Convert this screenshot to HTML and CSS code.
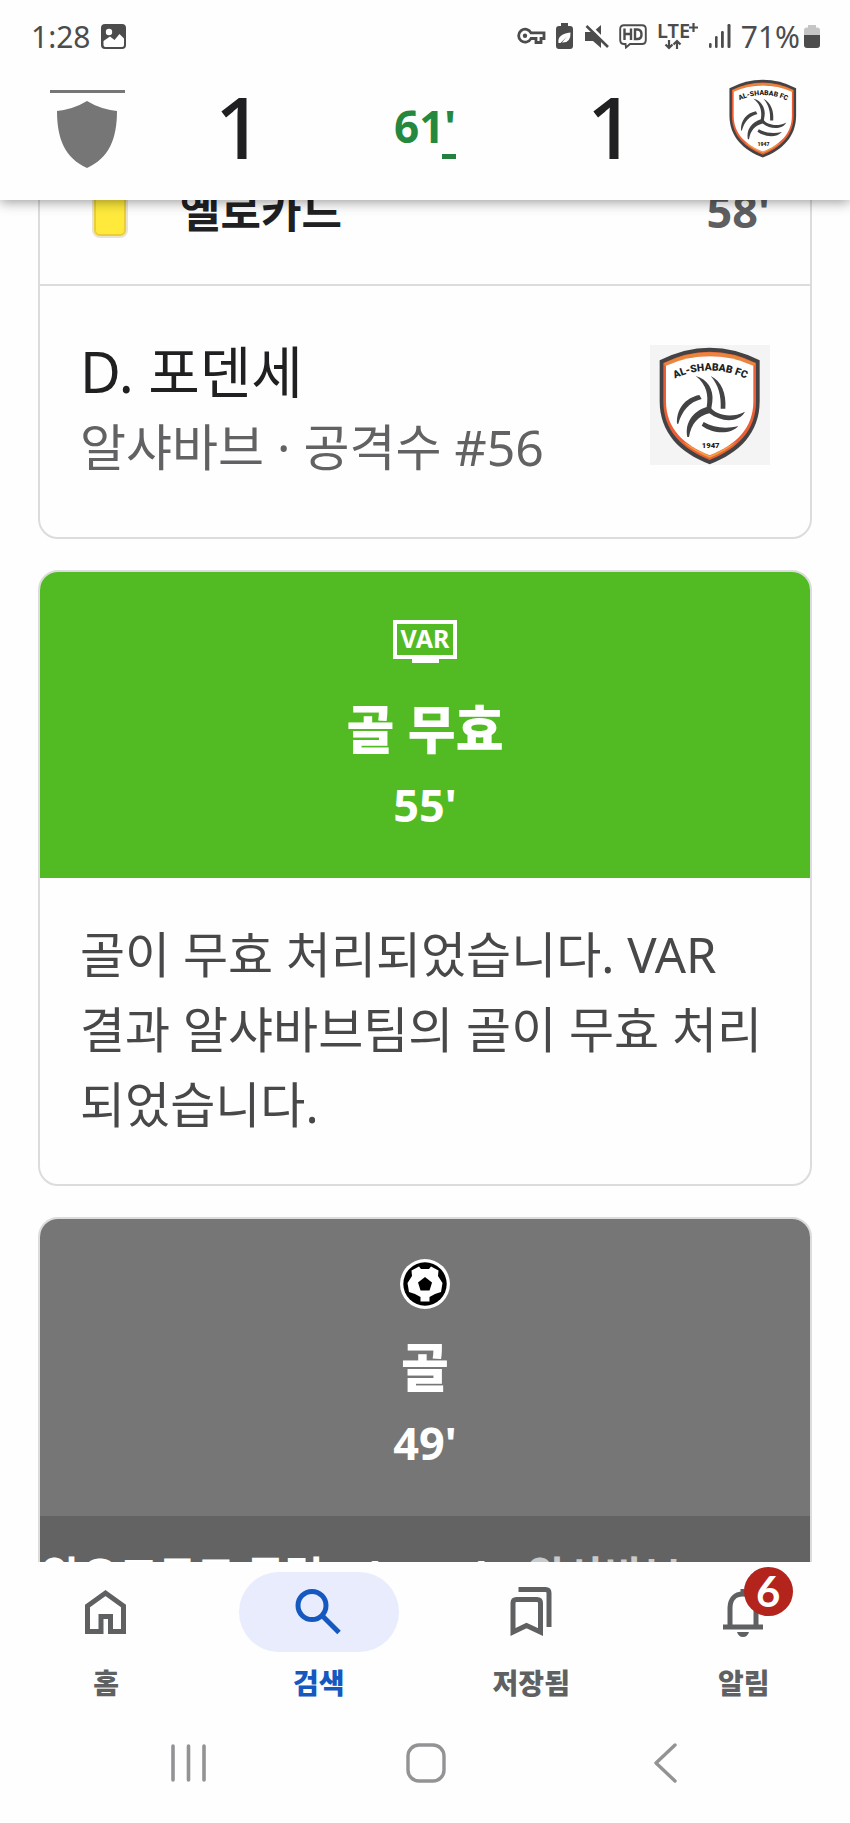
FILE: index.html
```html
<!DOCTYPE html>
<html lang="ko">
<head>
<meta charset="utf-8">
<meta name="viewport" content="width=device-width, initial-scale=1">
<title>알오크두드 클럽 1 - 1 알샤바브</title>
<link rel="stylesheet" href="styles.css">
</head>
<body>
<svg class="defs" aria-hidden="true">
  <symbol id="crest" viewBox="32 26 360 360">
    <path d="M61 72Q135 34 211 34Q288 34 361 72V195C361 290 300 350 211 384C122 350 61 290 61 195Z" fill="#434244"/>
    <path d="M72 80Q140 46 211 46Q282 46 350 80V195C350 284 293 338 211 371C129 338 72 284 72 195Z" fill="#ec5f35"/>
    <path d="M74 81Q140 48 211 48Q282 48 348 81L344 90Q280 58 211 58Q142 58 78 90Z" fill="#e8863c"/>
    <path d="M130 316Q165 346 211 364Q257 346 292 316L280 322Q250 342 211 358Q172 342 142 322Z" fill="#efa040"/>
    <path d="M80 88Q142 60 211 60Q280 60 342 88V195C342 276 290 326 211 357C132 326 80 276 80 195Z" fill="#fff"/>
    <g fill="#434244">
      <path d="M169 119C204 127 224 160 219 196L216 216C226 231 270 250 317 226C300 258 248 260 210 231C176 240 156 262 149 302H144C136 262 158 226 202 212C208 178 203 145 169 119Z"/>
      <path d="M214 119C246 134 262 172 258 217H244C246 180 238 146 214 119Z"/>
      <path d="M180 176L187 188C150 197 128 224 117 262H113C111 218 138 184 180 176Z"/>
      <path d="M193 257C222 273 258 279 297 269C276 294 224 295 187 268Z"/>
    </g>
    <path id="crest-arc" d="M106 127Q212 78 320 127" fill="none"/>
    <text class="crest-name"><textPath href="#crest-arc" startOffset="50%">AL-SHABAB FC</textPath></text>
    <text class="crest-year" x="214" y="334">1947</text>
  </symbol>
</svg>

<div class="app">
  <header class="top">
    <div class="status">
      <div class="status-group">
        <span>1:28</span>
        <svg width="25" height="25" viewBox="0 0 25 25"><rect width="25" height="25" rx="4" fill="#4c4c4c"/><circle cx="8" cy="8" r="3.200" fill="#fff"/><path d="M2.500 19V17L9 12.500L13.500 16L18.500 10L23 14.500V21Q23 23 21 23H4.500Q2.500 23 2.500 21Z" fill="#fff"/></svg>
      </div>
      <div class="status-group">
        <svg width="29" height="18" viewBox="0 0 29 18" fill="none" stroke="#4c4c4c" stroke-width="2.800"><path d="M14 5.800A6.500 6.500 0 1 0 14 11.500H19V15.500H24V11.500H27V5.800Z"/><circle cx="8" cy="8.700" r="2.200" fill="#4c4c4c" stroke="none"/></svg>
        <svg width="17" height="26" viewBox="0 0 17 26"><path d="M5 0H12V3H14Q17 3 17 6V23Q17 26 14 26H3Q0 26 0 23V6Q0 3 3 3H5Z" fill="#4c4c4c"/><path d="M2.500 20Q1 11 14.500 9.500Q15 20 6 19.500L11 13.500L4.500 20Z" fill="#fff"/></svg>
        <svg width="26" height="25" viewBox="0 0 26 25"><path d="M18 1V24L10 17H2V8H10Z" fill="#4c4c4c"/><path d="M5 0L26 21" stroke="#fff" stroke-width="3"/><path d="M3.500 2L25 23" stroke="#4c4c4c" stroke-width="2.600"/></svg>
        <svg width="28" height="25" viewBox="0 0 28 25"><path d="M5 1.200H23Q26.800 1.200 26.800 5V16Q26.800 20 23 20H11L7 23.500L6.500 20H5Q1.200 20 1.200 16V5Q1.200 1.200 5 1.200Z" fill="none" stroke="#4c4c4c" stroke-width="1.900"/><path d="M5.500 4.500V16M12 4.500V16M5.500 10H12M16 5.500V15H18.500Q22.500 15 22.500 10.200Q22.500 5.500 18.500 5.500Z" fill="none" stroke="#4c4c4c" stroke-width="2.400"/></svg>
        <svg width="42" height="29" viewBox="0 0 42 29"><text class="lte" x="0" y="16">LTE</text><path d="M36.500 1V10M32 5.500H41M12 18V26M8.500 22.500L12 26L15.500 22.500M20 27V19M16.500 22.500L20 19L23.500 22.500" fill="none" stroke="#4c4c4c" stroke-width="2.200"/></svg>
        <svg width="22" height="24" viewBox="0 0 22 24" fill="#4c4c4c"><rect y="19" width="2.600" height="5" rx="1.200"/><rect x="6" y="12" width="2.600" height="12" rx="1.200"/><rect x="12" y="7" width="2.800" height="17" rx="1.200"/><rect x="18.500" width="3" height="24" rx="1.200"/></svg>
        <span class="charge">71%<svg width="16" height="23" viewBox="0 0 16 23"><path d="M4 0H12V2.500H13Q16 2.500 16 5V10H0V5Q0 2.500 3 2.500H4Z" fill="#c5c5c5"/><path d="M0 10H16V20Q16 23 13 23H3Q0 23 0 20Z" fill="#4c4c4c"/></svg></span>
      </div>
    </div>
    <div class="score">
      <div class="team-mark"><svg width="62" height="67" viewBox="0 0 62 67"><path d="M31 0Q44 8 61 10C61 38 53 57 31 67C9 57 1 38 1 10Q18 8 31 0Z" fill="#767676"/></svg></div>
      <span class="goals">1</span>
      <div class="clock">61'</div>
      <span class="goals">1</span>
      <svg class="team-crest" role="img" aria-label="알샤바브"><use href="#crest"/></svg>
    </div>
  </header>

  <main class="feed">
    <div class="timeline">
      <article class="card">
        <div class="event">
          <span class="yellow"></span>
          <h2>옐로카드</h2>
          <time>58'</time>
        </div>
        <div class="player">
          <div>
            <h3>D. 포덴세</h3>
            <p>알샤바브 · 공격수 #56</p>
          </div>
          <svg class="player-crest" role="img" aria-label="알샤바브"><use href="#crest"/></svg>
        </div>
      </article>

      <article class="card">
        <div class="banner banner-var">
          <svg class="banner-icon" width="64" height="50" viewBox="0 0 64 50"><path d="M2 6H62V41H2Z" fill="none" stroke="#fff" stroke-width="4"/><path d="M19 42H46V47H19Z" fill="#fff"/><text class="var-mark" x="32" y="32">VAR</text></svg>
          <h2>골 무효</h2>
          <time>55'</time>
        </div>
        <p class="note">골이 무효 처리되었습니다. VAR 결과 알샤바브팀의 골이 무효 처리되었습니다.</p>
      </article>

      <article class="card">
        <div class="banner banner-goal">
          <svg class="banner-icon" width="50" height="50" viewBox="0 0 50 50"><circle cx="25" cy="25" r="25" fill="#fff"/><circle cx="25" cy="25" r="21.700" fill="#000"/><path d="M21 10H29L31 7.500L38.500 11.500L38 17L42.500 24L41 33L35 35L29.500 38V42.500H20.500V38L15 35L9 33L7.500 24L12 17L11.500 11.500L19 7.500Z" fill="#fff"/><path d="M25 18L32 23.500L29.500 31.500H20.500L18 23.500Z" fill="#000"/></svg>
          <h2>골</h2>
          <time>49'</time>
        </div>
        <div class="result">
          <span class="home">알오크두드 클럽</span>
          <span class="tally"><span>1</span><span>-</span><span>1</span></span>
          <span class="away">알샤바브</span>
        </div>
      </article>
    </div>
  </main>

  <nav class="tabs">
    <a href="#home"><span class="pill"><svg width="48" height="52" viewBox="0 0 48 52" fill="none" stroke="#5f6062" stroke-width="5"><path d="M5.500 20L23.500 7L41.500 20V45.500H28.500V30.500H19V45.500H5.500Z"/></svg></span>홈</a>
    <a href="#search" class="current" aria-current="page"><span class="pill"><svg width="48" height="52" viewBox="0 0 48 52" fill="none" stroke="#1558c0" stroke-width="5"><circle cx="17" cy="19.500" r="14"/><path d="M27 29.500L44 46.500"/></svg></span>검색</a>
    <a href="#saved"><span class="pill"><svg width="48" height="52" viewBox="0 0 48 52" fill="none" stroke="#5f6062" stroke-width="5"><path d="M6 46V17Q6 13.500 9.500 13.500H30Q33.500 13.500 33.500 17V46L19.500 39.500Z"/><path d="M11.500 3.500H38.500Q42 3.500 42 7V41"/></svg></span>저장됨</a>
    <a href="#alerts"><span class="pill"><svg width="48" height="52" viewBox="0 0 48 52" fill="none" stroke="#5f6062" stroke-width="5"><path d="M3 41H43M10 40V22C10 13 15 8 23 8C31 8 36 13 36 22V40"/><path d="M23 3V8"/><path d="M17 46H29Q27.500 51 23 51Q18.500 51 17 46Z" fill="#5f6062" stroke="none"/></svg><span class="badge">6</span></span>알림</a>
  </nav>
  <div class="system">
    <button type="button" aria-label="최근 앱"><svg width="40" height="40" viewBox="0 0 40 40" stroke="#939395" stroke-width="3.600" stroke-linecap="round"><path d="M4 3V37M19.500 3V37M35 3V37"/></svg></button>
    <button type="button" aria-label="홈 화면"><svg width="40" height="40" viewBox="0 0 40 40" fill="none" stroke="#939395" stroke-width="3.400"><rect x="2" y="2" width="36" height="36" rx="11"/></svg></button>
    <button type="button" aria-label="뒤로"><svg width="40" height="40" viewBox="0 0 40 40" fill="none" stroke="#939395" stroke-width="3.400" stroke-linecap="round" stroke-linejoin="round"><path d="M32 2L13 20L32 38"/></svg></button>
  </div>
</div>
</body>
</html>
```
FILE: styles.css
```css
* { box-sizing: border-box; }
body, h2, h3, p { margin: 0; }
body {
  background: #fefefe;
  color: #202022;
  font-family: "Noto Sans", "Noto Sans CJK KR", sans-serif;
}
svg { display: block; flex: none; }
.defs { position: absolute; width: 0; height: 0; }

.app { display: flex; flex-direction: column; height: 100vh; }

/* Header */
.top {
  position: relative;
  z-index: 1;
  background: #fefefe;
  box-shadow: 0 2px 12px rgba(0, 0, 0, .4);
  padding-bottom: 16px;
}
.status {
  display: flex;
  justify-content: space-between;
  align-items: center;
  height: 72px;
  padding: 0 30px 0 31px;
  font-size: 30px;
  color: #4c4c4c;
}
.status-group { display: flex; align-items: center; gap: 10px; }
.charge { display: flex; align-items: center; gap: 4px; }
.lte { font: 600 20px "Noto Sans", sans-serif; fill: #4c4c4c; }
.score {
  display: grid;
  grid-template-columns: 174fr 130fr 242fr 130fr 174fr;
  justify-items: center;
  height: 112px;
}
.team-mark {
  display: grid;
  justify-items: center;
  align-self: start;
  width: 75px;
  margin-top: 18px;
  padding-top: 8px;
  border-top: 3px solid #767676;
}
.goals { font-size: 86px; line-height: 108px; font-weight: 500; }
.clock {
  position: relative;
  align-self: start;
  margin-top: 24px;
  font-size: 44px;
  line-height: 60px;
  font-weight: 700;
  color: #24893f;
}
.clock::after {
  content: "";
  position: absolute;
  right: 0;
  bottom: -3px;
  width: 14px;
  height: 5px;
  background: #24803f;
}
.team-crest { width: 80px; height: 80px; margin-top: 6px; }
.crest-name { font: 900 31px Roboto, sans-serif; fill: #222; text-anchor: middle; }
.crest-year { font: 900 23px Roboto, sans-serif; fill: #222; text-anchor: middle; }

/* Timeline, scrolled under the header */
.feed { flex: 1; min-height: 0; overflow: hidden; }
.timeline {
  display: flex;
  flex-direction: column;
  gap: 31px;
  margin-top: -64px;
  padding: 0 38px;
}
.card { border: 2px solid #dcdcde; border-radius: 20px; overflow: hidden; background: #fefefe; }
.event {
  display: flex;
  align-items: center;
  height: 148px;
  padding: 0 40px 0 54px;
  border-bottom: 2px solid #dcdcde;
}
.yellow {
  width: 32px;
  height: 50px;
  border: 2px solid #ebce35;
  border-radius: 6px;
  background: #ffea3c;
  box-shadow: 0 0 0 2px #e8e4d0;
}
.event h2 { flex: 1; margin-left: 54px; font-size: 44px; line-height: 68px; font-weight: 700; }
time { font-size: 45px; line-height: 76px; font-weight: 700; }
.event time { line-height: 68px; color: #5f5f61; }
.player {
  display: flex;
  justify-content: space-between;
  align-items: flex-start;
  padding: 47px 40px 52px 40px;
}
.player h3 { font-size: 56px; line-height: 76px; font-weight: 400; }
.player p { font-size: 50px; line-height: 76px; color: #626264; }
.player-crest { width: 120px; height: 120px; margin-top: 12px; background: #f5f4f5; }

.banner { display: flex; flex-direction: column; align-items: center; color: #fff; }
.banner-icon { margin-top: 44px; }
.banner h2 { margin-top: 25px; font-size: 52px; line-height: 76px; font-weight: 900; }
.banner-var { height: 306px; background: #52bb23; }
.banner-goal { height: 297px; background: #767676; }
.banner-goal .banner-icon { margin-top: 40px; }
.banner-goal h2 { margin-top: 20px; }
.var-mark { font: 700 25px "Noto Sans", sans-serif; fill: #fff; text-anchor: middle; }
.note {
  padding: 39px 40px 42px;
  font-size: 49px;
  line-height: 75px;
  color: #48484a;
  word-break: break-all;
}
.result {
  display: flex;
  gap: 36px;
  padding: 24px 2px;
  background: #636363;
  color: #fff;
  font-size: 42px;
  line-height: 72px;
  font-weight: 700;
  white-space: nowrap;
}
.away { color: #cacaca; }
.tally { display: flex; justify-content: space-between; width: 132px; font-size: 45px; }

/* Bottom navigation */
.tabs {
  display: grid;
  grid-template-columns: repeat(4, 1fr);
  height: 146px;
  padding-top: 10px;
  background: #fefefe;
}
.tabs a {
  display: flex;
  flex-direction: column;
  align-items: center;
  gap: 11px;
  color: #5f6062;
  font-size: 28px;
  line-height: 40px;
  font-weight: 900;
  text-decoration: none;
}
.pill {
  position: relative;
  display: grid;
  place-items: center;
  width: 160px;
  height: 80px;
  border-radius: 40px;
}
.tabs .current { color: #1558c0; }
.current .pill { background: #e8ecfd; }
.badge {
  position: absolute;
  top: -5px;
  right: 31px;
  width: 49px;
  height: 49px;
  border-radius: 50%;
  background: #b3241c;
  color: #fff;
  font: 700 42px/49px Lato, sans-serif;
  text-align: center;
}
.system {
  display: grid;
  grid-template-columns: repeat(3, 1fr);
  align-items: center;
  justify-items: center;
  height: 115px;
  padding: 0 68px 6px 70px;
}
.system button { padding: 0; border: 0; background: none; }
```
